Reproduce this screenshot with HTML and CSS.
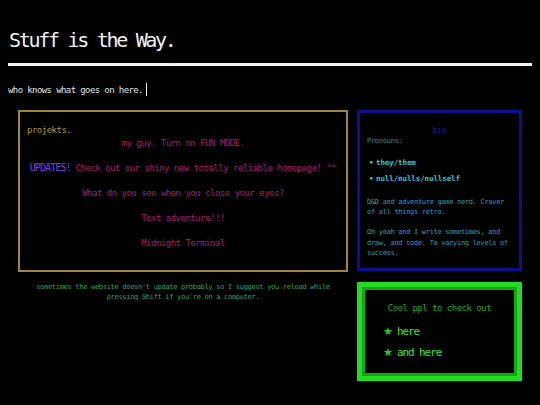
FILE: index.html
```html
<!DOCTYPE html>
<html lang="en">
<head>
<meta charset="utf-8">
<title>Stuff is the Way.</title>
<link rel="stylesheet" href="styles.css">
</head>
<body>
<header class="site-header">
  <h1 class="title">Stuff is the Way.</h1>
  <hr class="rule">
  <p class="tagline">who knows what goes on here.<span class="cursor"></span></p>
</header>
<main class="layout">
  <section class="left-col">
    <div class="projects">
      <p class="projects-head">projekts.</p>
      <p class="proj">my guy. Turn on FUN MODE.</p>
      <p class="proj"><span class="updates">UPDATES!</span> Check out our shiny new totally reliable homepage! ^^</p>
      <p class="proj">What do you see when you close your eyes?</p>
      <p class="proj">Text adventure!!!</p>
      <p class="proj">Midnight Terminal</p>
    </div>
    <p class="note">sometimes the website doesn't update probably so I suggest you reload while<br>pressing Shift if you're on a computer.</p>
  </section>
  <aside class="right-col">
    <div class="bio">
      <h2 class="bio-head">bio</h2>
      <p class="pronouns">Pronouns:</p>
      <ul class="pron-list">
        <li>they/them</li>
        <li>null/nulls/nullself</li>
      </ul>
      <p class="bio-text">D&amp;D and adventure game nerd. Craver of all things retro.</p>
      <p class="bio-text second">Oh yeah and I write sometimes, and draw, and code. To varying levels of success.</p>
    </div>
    <div class="cool">
      <p class="cool-head">Cool ppl to check out</p>
      <ul class="cool-list">
        <li><span class="star">★</span>here</li>
        <li><span class="star">★</span>and here</li>
      </ul>
    </div>
  </aside>
</main>
</body>
</html>
```
FILE: styles.css
```css
html, body {
  background: #000;
}
body {
  margin: 0 8px;
  font-family: "DejaVu Sans Mono", "Liberation Mono", monospace;
  color: #e8e8e8;
}
p, h1, h2, ul {
  margin: 0;
  padding: 0;
}
.title {
  margin-top: 28px;
  font-size: 20px;
  line-height: 24px;
  font-weight: normal;
  letter-spacing: -2.3px;
  color: #f2f2f2;
  padding-left: 1px;
}
.rule {
  margin: 11px 0 0;
  border: 0;
  height: 3px;
  background: #f0f0f0;
}
.tagline {
  margin-top: 17px;
  font-size: 9px;
  line-height: 12px;
  letter-spacing: -0.6px;
  color: #e4e4e4;
}
.cursor {
  display: inline-block;
  width: 1px;
  height: 13px;
  background: #f0f0f0;
  margin-left: 3px;
  vertical-align: -3px;
}
.layout {
  display: flex;
  align-items: flex-start;
  gap: 9px;
  padding: 0 10px;
  margin-top: 14px;
}
.left-col {
  width: 330px;
  flex: none;
}
.right-col {
  width: 165px;
  flex: none;
  display: flex;
  flex-direction: column;
  gap: 11px;
}
.projects {
  border: 2px solid #9c8834;
  padding: 12px 7px 21px;
  text-align: center;
}
.projects-head {
  text-align: left;
  font-size: 9px;
  line-height: 12px;
  letter-spacing: -0.5px;
  color: #ae9a40;
  margin-bottom: 1px;
}
.proj {
  font-size: 9px;
  line-height: 12px;
  letter-spacing: -0.5px;
  color: #a3206c;
  white-space: nowrap;
}
.proj + .proj {
  margin-top: 13px;
}
.updates {
  color: #7c3ee0;
  font-size: 10px;
  letter-spacing: -0.9px;
}
.note {
  margin-top: 10px;
  text-align: center;
  font-size: 7px;
  line-height: 10px;
  letter-spacing: -0.3px;
  color: #2ea268;
}
.bio {
  border: 3px solid #0e0e8e;
  padding: 13px 7px 9px;
}
.bio-head {
  text-align: center;
  font-weight: normal;
  font-size: 8px;
  line-height: 10px;
  letter-spacing: -0.15px;
  color: #1c1ca2;
}
.pronouns {
  font-size: 7px;
  line-height: 10px;
  letter-spacing: -0.3px;
  color: #2a8ea0;
}
.pron-list {
  list-style: none;
  margin-top: 11px;
}
.pron-list li {
  display: flex;
  font-size: 7.5px;
  font-weight: bold;
  line-height: 12px;
  letter-spacing: -0.1px;
  color: #35c4d6;
}
.pron-list li + li {
  margin-top: 3.5px;
}
.pron-list li::before {
  content: "•";
  width: 7px;
  padding-left: 2px;
  flex: none;
}
.bio-text {
  margin-top: 12px;
  font-size: 7px;
  line-height: 10.5px;
  letter-spacing: -0.3px;
  color: #2f9ec2;
}
.bio-text.second {
  margin-top: 9.75px;
}
.cool {
  border: 5px solid #22dc22;
  box-shadow: inset 0 0 0 3px #11a811;
  padding: 15px 17px 16px;
}
.cool-head {
  text-align: center;
  font-size: 9px;
  line-height: 12px;
  letter-spacing: -0.5px;
  color: #24a624;
}
.cool-list {
  list-style: none;
  margin-top: 11.5px;
  padding-left: 4px;
}
.cool-list li {
  display: flex;
  align-items: center;
  font-size: 11px;
  line-height: 14px;
  letter-spacing: -1.1px;
  color: #38e038;
}
.cool-list li + li {
  margin-top: 6.5px;
}
.star {
  font-family: "DejaVu Sans", sans-serif;
  font-size: 11px;
  letter-spacing: 0;
  color: #22cc22;
  width: 14px;
  flex: none;
}
```
